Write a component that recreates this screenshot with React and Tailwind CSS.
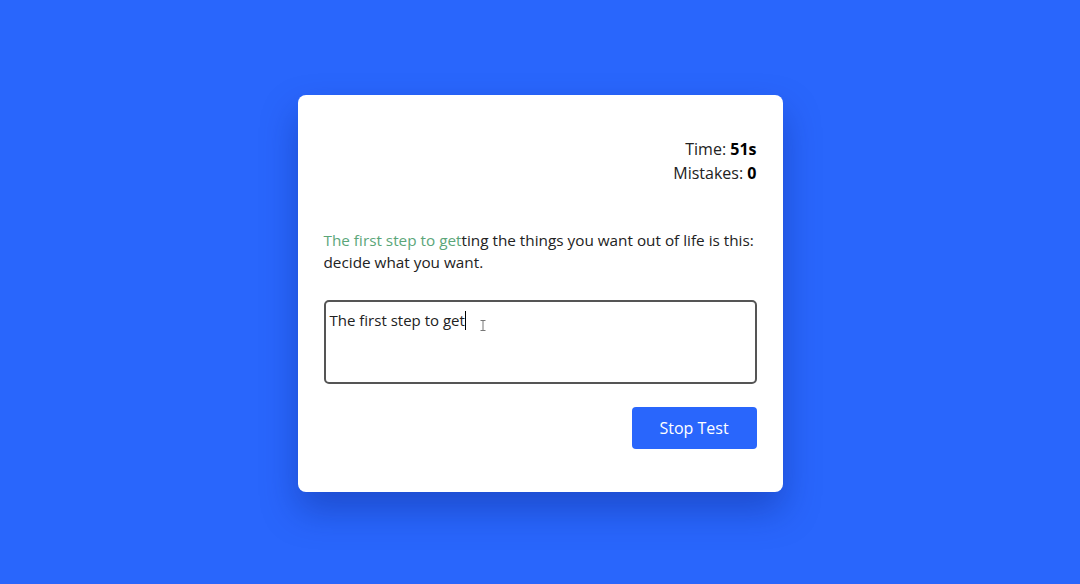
import { useState } from "react";

const target =
  "The first step to getting the things you want out of life is this: decide what you want.";

export default function App() {
  const [typed] = useState("The first step to get");

  return (
    <div
      className="w-full h-[584px] bg-[#2966fc] flex items-start justify-center pt-[95px]"
      style={{ fontFamily: '"Open Sans", "Liberation Sans", sans-serif' }}
    >
      <div className="w-[485px] h-[397px] bg-white rounded-lg px-[26px] pt-[42px] shadow-[0_18px_36px_rgba(10,30,120,0.35)]">
        {/* ---------------- STATS ---------------- */}
        <div className="flex flex-col items-end text-[16px] leading-6 text-[#222]">
          <p>
            Time: <span className="font-bold text-black">51s</span>
          </p>
          <p>
            Mistakes: <span className="font-bold text-black">0</span>
          </p>
        </div>

        {/* ---------------- QUOTE ---------------- */}
        <p className="mt-[44px] text-[15.3px] leading-[22px] text-[#222]">
          <span className="text-[#5ba679]">{typed}</span>
          <span>{target.slice(typed.length)}</span>
        </p>

        {/* ---------------- INPUT ---------------- */}
        <div className="relative mt-[27px] h-[84px] border-2 border-[#555] rounded-[5px] px-[4px] pt-[7px] text-[15px] text-[#222]">
          <span>{typed}</span>
          <span className="inline-block w-px h-[19px] bg-black align-middle -mt-[3px]"></span>
          <svg
            className="absolute left-[154px] top-[18px]"
            width="6"
            height="11"
            viewBox="0 0 6 11"
            fill="none"
            stroke="#777"
            strokeWidth="1"
          >
            <path d="M0.5 0.5h5M3 0.5v10M0.5 10.5h5" />
          </svg>
        </div>

        {/* ---------------- ACTIONS ---------------- */}
        <div className="flex justify-end mt-[23px]">
          <button className="w-[125px] h-[42px] bg-[#2966fc] text-white text-[16px] rounded-[4px]">
            Stop Test
          </button>
        </div>
      </div>
    </div>
  );
}
